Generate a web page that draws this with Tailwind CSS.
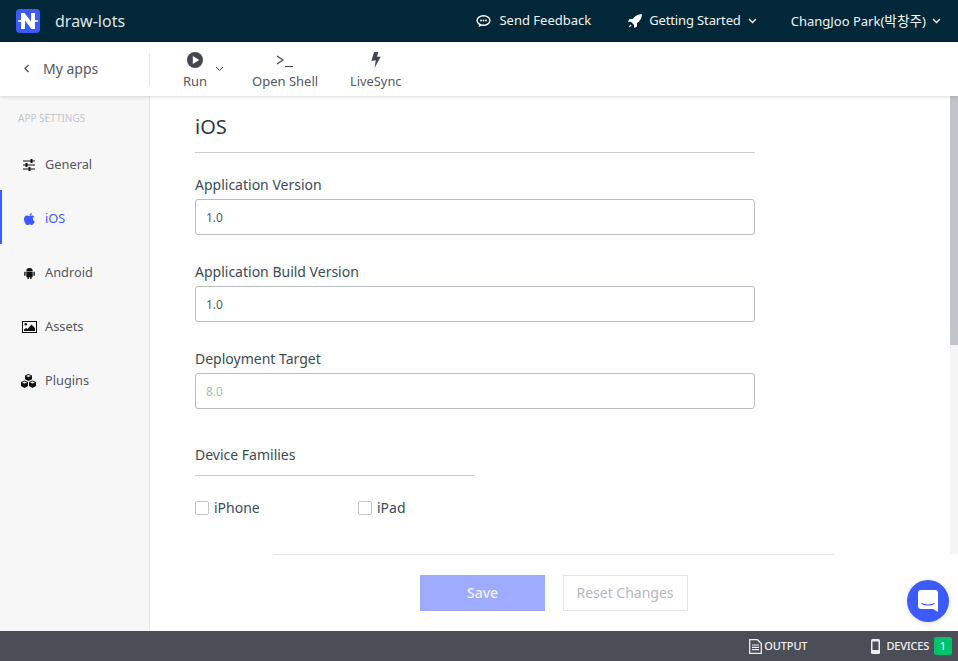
<!DOCTYPE html>
<html><head><meta charset="utf-8"><script src="https://cdn.jsdelivr.net/npm/@tailwindcss/browser@4"></script></head>
<body class="m-0 overflow-hidden">
<div class="relative flex h-[661px] w-[958px] flex-col overflow-hidden bg-white font-['Noto_Sans','Noto_Sans_CJK_KR',sans-serif] text-[13px] text-[#55585f]">
  <header class="flex h-[42px] shrink-0 items-center bg-[#012738] text-white">
    <div class="ml-[16px] flex h-6 w-6 items-center justify-center rounded-[4px] bg-[#3d5afe]">
      <svg width="20" height="18" viewBox="0 0 20 18"><path d="M0 9h3M17 9h3" stroke="#fff" stroke-width="1.500"/><path d="M3 17V1h3.500L13 9.500V1h4v16h-3.500L7 8.500V17z" fill="#fff"/></svg>
    </div>
    <span class="ml-[15px] text-[16px] text-[#dfe5e8]">draw-lots</span>
    <div class="ml-auto flex items-center text-[13px] text-[#f2f4f5]">
      <svg class="mr-[8px]" width="15" height="14" viewBox="0 0 15 14" fill="none"><ellipse cx="7.500" cy="6.500" rx="6.400" ry="4.800" stroke="#fff" stroke-width="1.400"/><path d="M3.500 10.500 2.600 13l3.400-1.600" fill="#fff"/><circle cx="5" cy="6.500" r=".9" fill="#fff"/><circle cx="7.500" cy="6.500" r=".9" fill="#fff"/><circle cx="10" cy="6.500" r=".9" fill="#fff"/></svg>
      <span>Send Feedback</span>
      <svg class="ml-[37px] mr-[7px]" width="14" height="14" viewBox="0 0 14 14"><path d="M14 0C9.500.2 6.800 2 4.700 5H1.500L0 7.700l3.200.4 2.700 2.700.4 3.200L9 12.500V9.300c3-2.100 4.800-4.800 5-9.300zM2.500 10.500c-1 .5-1.500 1.800-1.500 2.500.8 0 2-.5 2.500-1.500z" fill="#fff"/></svg>
      <span class="tracking-[-0.13px]">Getting Started</span>
      <svg class="ml-[7px]" width="9" height="6" viewBox="0 0 9 6" fill="none"><path d="m1 1 3.500 3.500L8 1" stroke="#fff" stroke-width="1.400"/></svg>
      <span class="ml-[34px]">ChangJoo Park(<span class="text-[13.700px]">박창주</span>)</span>
      <svg class="ml-[6px] mr-[17px]" width="9" height="6" viewBox="0 0 9 6" fill="none"><path d="m1 1 3.500 3.500L8 1" stroke="#fff" stroke-width="1.400"/></svg>
    </div>
  </header>

  <nav class="relative z-10 flex h-[54px] shrink-0 bg-white shadow-[0_1px_4px_rgba(0,0,0,0.14)]">
    <div class="mt-[11px] flex h-[32px] w-[150px] items-center border-r border-[#e6e6e9] pb-[2px] pl-[23px] text-[14px]">
      <svg width="7" height="9" viewBox="0 0 7 9" fill="none"><path d="M5.500 1 2 4.500 5.500 8" stroke="#44474f" stroke-width="1.200"/></svg>
      <span class="ml-[13px]">My apps</span>
    </div>
    <div class="relative ml-[33px] flex w-[24px] flex-col items-center pt-[10px]">
      <svg width="16" height="16" viewBox="0 0 16 16"><circle cx="8" cy="8" r="8" fill="#44474f"/><path d="M5.800 4v8l6.400-4z" fill="#fff"/></svg>
      <span class="mt-[4px] leading-[18px]">Run</span>
    </div>
    <svg class="ml-[8px] mt-[24px]" width="9" height="6" viewBox="0 0 9 6" fill="none"><path d="m1 1 3.500 3.500L8 1" stroke="#44474f" stroke-width="1"/></svg>
    <div class="ml-[28px] flex flex-col items-center pt-[10px]">
      <svg width="18" height="16" viewBox="0 0 18 16" fill="none"><path d="m1 4 6 4-6 4M9 14.500h8" stroke="#44474f" stroke-width="1.200"/></svg>
      <span class="mt-[4px] leading-[18px]">Open Shell</span>
    </div>
    <div class="ml-[32px] flex flex-col items-center pt-[10px]">
      <svg width="10" height="16" viewBox="0 0 10 17"><path d="M3 0h4.500L6 5h4L3.500 17l1.200-8.200L0 9.500z" fill="#44474f"/></svg>
      <span class="mt-[4px] text-[12.800px] leading-[18px]">LiveSync</span>
    </div>
  </nav>

  <div class="flex min-h-0 flex-1">
    <aside class="w-[150px] shrink-0 border-r border-[#e8e8ec] bg-[#f7f7f8]">
      <div class="h-[40px] pl-[18px] pt-[14px] text-[10px] leading-[16px] text-[#c3c5cb]">APP SETTINGS</div>
      <a class="flex h-[54px] items-center pl-[23px] pt-[4px] text-[12.800px]">
        <svg width="12" height="12" viewBox="0 0 12 12"><path d="M0 1.500h12v1H0zM0 5.500h12v1H0zM0 9.500h12v1H0z" fill="#111"/><path d="M7.500 0h2v4h-2zM2.500 4h2v4h-2zM5.500 8h2v4h-2z" fill="#111"/></svg>
        <span class="ml-[10px]">General</span>
      </a>
      <a class="flex h-[54px] items-center border-l-2 border-[#3d5afe] pl-[22px] pt-[4px] text-[12.800px] text-[#3d5afe]">
        <svg width="11" height="12" viewBox="0 0 11 12"><path d="M5.500 3C4.200 3 3.600 2.400 2.800 2.500 1.300 2.700 0 4 0 6.200 0 8.800 1.900 12 3.300 12c.9 0 1.300-.6 2.300-.6s1.300.6 2.200.6c1.100 0 2.400-2 3-3.500-1.300-.6-1.900-1.700-1.900-2.700 0-1 .5-1.900 1.500-2.500C9.700 2.700 8.700 2.400 7.900 2.500 7 2.500 6.200 3 5.500 3z" fill="#3d5afe"/><path d="M5.500 2.800C5.400 1.400 6.500.2 7.800 0c.1 1.500-1 2.700-2.300 2.800z" fill="#3d5afe"/></svg>
        <span class="ml-[10px]">iOS</span>
      </a>
      <a class="flex h-[54px] items-center pl-[24px] pt-[4px] text-[12.800px]">
        <svg width="11" height="12" viewBox="0 0 11 12"><path d="M2.300 4.200a3.200 3.200 0 0 1 6.400 0zM2.300 4.800h6.400v4.700c0 .4-.3.700-.7.700H3c-.4 0-.7-.3-.7-.7zM.2 4.800h1.400v4H.2zM9.400 4.800h1.400v4H9.400zM3.500 10h1.400v2H3.500zM6.100 10h1.400v2H6.100z" fill="#111"/></svg>
        <span class="ml-[10px]">Android</span>
      </a>
      <a class="flex h-[54px] items-center pl-[22px] pt-[4px] text-[12.800px]">
        <svg width="15" height="12" viewBox="0 0 15 12" fill="none"><rect x=".5" y=".5" width="14" height="11" stroke="#111"/><circle cx="3.800" cy="3.300" r="1.300" fill="#111"/><path d="M2 10V8.500L4 7l1.500 1L9.500 3.500 13 7v3z" fill="#111"/></svg>
        <span class="ml-[8px]">Assets</span>
      </a>
      <a class="flex h-[54px] items-center pl-[20px] pt-[4px] text-[12.800px]">
        <svg width="17" height="14" viewBox="0 0 17 14"><path d="M8.500 0 12 1.500v3.800L8.500 7 5 5.300V1.500zM4.500 6.500 8 8v4l-3.500 2L1 12V8zM12.500 6.500 16 8v4l-3.500 2L9 12V8z" fill="#111"/><path d="M8.500 1 6 2l2.500 1 2.500-1zM4.500 7.500 2 8.500l2.500 1 2.500-1zM12.500 7.500 10 8.500l2.500 1 2.500-1z" fill="#f7f7f8"/></svg>
        <span class="ml-[8px]">Plugins</span>
      </a>
    </aside>

    <main class="relative flex min-w-0 flex-1 flex-col">
      <div class="absolute right-0 top-0 h-[458px] w-[8px] bg-[#f5f5f8]"><div class="h-[249px] w-full bg-[#c1c3cb]"></div></div>
      <div class="h-[458px] overflow-hidden pl-[45px]">
        <div class="w-[560px]">
          <h1 class="flex h-[57px] items-start border-b border-[#c9cbcf] pt-[16px] text-[20px] leading-[30px] font-normal text-[#2a3a42]">iOS</h1>
          <label class="mt-[22px] block text-[14px] leading-[20px] text-[#3b4b54]">Application Version</label>
          <div class="mt-[4px] flex h-[36px] items-center rounded-[3px] border border-[#b9bcc1] pl-[10px] pt-[1px] text-[12px] text-[#55585f]">1.0</div>
          <label class="mt-[27px] block text-[14px] leading-[20px] text-[#3b4b54]">Application Build Version</label>
          <div class="mt-[4px] flex h-[36px] items-center rounded-[3px] border border-[#b9bcc1] pl-[10px] pt-[1px] text-[12px] text-[#55585f]">1.0</div>
          <label class="mt-[27px] block text-[14px] leading-[20px] text-[#3b4b54]">Deployment Target</label>
          <div class="mt-[4px] flex h-[36px] items-center rounded-[3px] border border-[#b9bcc1] pl-[10px] pt-[1px] text-[12px] text-[#b4b7bc]">8.0</div>
          <div class="mt-[36px] h-[31px] w-[280px] border-b border-[#c9cbcf] text-[14px] leading-[20px] text-[#3b4b54]">Device Families</div>
          <div class="mt-[22px] flex text-[14px] leading-[20px] text-[#3b4b54]">
            <div class="flex w-[163px] items-center"><span class="h-[14px] w-[14px] rounded-[2px] border border-[#c4c6ca]"></span><span class="ml-[5px]">iPhone</span></div>
            <div class="flex items-center"><span class="h-[14px] w-[14px] rounded-[2px] border border-[#c4c6ca]"></span><span class="ml-[5px]">iPad</span></div>
          </div>
        </div>
      </div>
      <div class="ml-[123px] flex w-[561px] flex-1 justify-center border-t border-[#e8e8ec] pt-[20px]">
        <div class="flex h-[36px] items-start">
          <button class="mr-[18px] h-[36px] w-[125px] bg-[#9fabff] pb-[2px] pl-[1px] text-[14px] font-medium text-[#f2f4ff]">Save</button>
          <button class="h-[36px] w-[125px] border border-[#e4e5e8] bg-white pb-[2px] text-[14px] text-[#b4b7be]">Reset Changes</button>
        </div>
      </div>
    </main>
  </div>

  <footer class="flex h-[30px] shrink-0 items-center justify-end bg-[#4b4e56] text-[11px] font-medium text-[#f0f1f2]">
    <svg width="13" height="15" viewBox="0 0 13 15" fill="none"><path d="M.7.700h7.800l3.800 3.800v9.800H.7z" stroke="#eee" stroke-width="1.300"/><path d="M3 6h7M3 8.300h7M3 10.600h7" stroke="#eee" stroke-width="1.200"/></svg>
    <span class="ml-[2px] tracking-[-0.15px]">OUTPUT</span>
    <svg class="ml-[64px]" width="9" height="15" viewBox="0 0 9 15"><rect width="9" height="15" rx="1.500" fill="#eee"/><rect x="1.500" y="2.500" width="6" height="8.500" fill="#4b4e56"/></svg>
    <span class="ml-[6px] tracking-[-0.2px]">DEVICES</span>
    <span class="ml-[5px] mr-[6px] flex h-[18px] w-[18px] items-center justify-center rounded-[2px] bg-[#00c26b] text-[11px] font-normal text-white">1</span>
  </footer>

  <div class="absolute left-[907px] top-[580px] flex h-[42px] w-[42px] items-center justify-center rounded-full bg-[#3d5afe] shadow-[0_1px_6px_rgba(0,0,0,0.12)]">
    <svg width="20" height="22" viewBox="0 0 20 22"><path d="M3 0h14a3 3 0 0 1 3 3v19l-5-3H3a3 3 0 0 1-3-3V3a3 3 0 0 1 3-3z" fill="#fff"/><path d="M3.500 13.500c3.500 2 9.500 2 13 0" stroke="#3d5afe" stroke-width="1.100" fill="none"/></svg>
  </div>
</div>
</body></html>
